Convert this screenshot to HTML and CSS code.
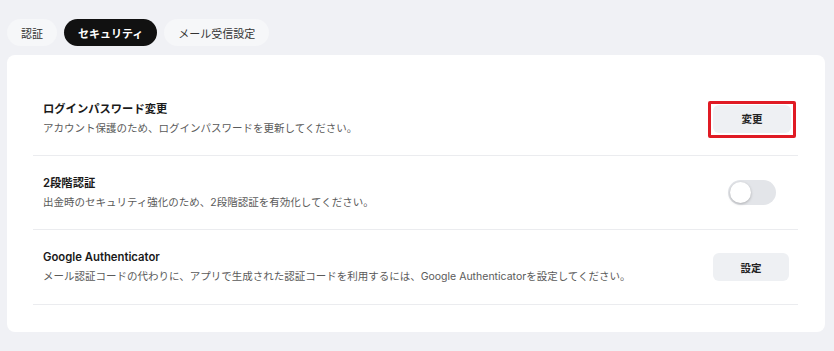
FILE: index.html
```html
<!DOCTYPE html>
<html lang="ja">
<head>
<meta charset="utf-8">
<link rel="stylesheet" href="styles.css">
</head>
<body>
<div class="page">
  <nav class="tabs">
    <span class="tab">認証</span>
    <span class="tab active">セキュリティ</span>
    <span class="tab">メール受信設定</span>
  </nav>
  <section class="card">
    <div class="row">
      <div class="info">
        <div class="title">ログインパスワード変更</div>
        <div class="desc">アカウント保護のため、ログインパスワードを更新してください。</div>
      </div>
      <button class="btn highlighted">変更</button>
    </div>
    <div class="row">
      <div class="info">
        <div class="title">2段階認証</div>
        <div class="desc">出金時のセキュリティ強化のため、2段階認証を有効化してください。</div>
      </div>
      <span class="toggle"><span class="knob"></span></span>
    </div>
    <div class="row">
      <div class="info">
        <div class="title">Google Authenticator</div>
        <div class="desc">メール認証コードの代わりに、アプリで生成された認証コードを利用するには、Google Authenticatorを設定してください。</div>
      </div>
      <button class="btn">設定</button>
    </div>
  </section>
</div>
</body>
</html>
```

FILE: styles.css
```css
* { box-sizing: border-box; }
html, body { margin: 0; padding: 0; }
body {
  background: #f0f1f5;
  font-family: Inter, "Noto Sans CJK JP", sans-serif;
  color: #1a1a1a;
  width: 834px;
  height: 351px;
  overflow: hidden;
}
.page {
  padding: 19px 9px 0 7px;
}
.tabs {
  display: flex;
  gap: 7px;
  height: 27px;
}
.tab {
  display: flex;
  align-items: center;
  justify-content: center;
  height: 27px;
  padding: 0 14px;
  border-radius: 14px;
  background: #f6f7f9;
  font-size: 11px;
  color: #333;
}
.tab.active {
  background: #111;
  color: #fff;
  font-weight: 700;
}
.card {
  margin-top: 9px;
  background: #fff;
  border-radius: 8px;
  padding: 27px 27px 27px 26px;
}
.row {
  display: flex;
  align-items: center;
  justify-content: space-between;
  height: 74px;
  padding-left: 10px;
  border-bottom: 1px solid #ebecef;
}
.row:nth-child(3) { height: 75px; }
.info {
  display: flex;
  flex-direction: column;
  gap: 2px;
}
.title {
  font-size: 11.3px;
  font-weight: 600;
  line-height: 18px;
  color: #1a1a1a;
}
.desc {
  font-size: 10.5px;
  line-height: 18px;
  color: #5a5a5a;
}
.btn {
  width: 76px;
  height: 28px;
  margin-right: 9px;
  border: none;
  border-radius: 6px;
  background: #eef0f3;
  font-family: inherit;
  font-size: 10.5px;
  font-weight: 600;
  color: #222;
}
.btn.highlighted {
  position: relative;
  width: 78px;
  margin-right: 7px;
}
.btn.highlighted::after {
  content: "";
  position: absolute;
  top: -4px;
  bottom: -5px;
  left: -5px;
  right: -5px;
  border: 3px solid #e01b24;
  border-radius: 2px;
}
.toggle {
  display: flex;
  align-items: center;
  width: 48px;
  height: 25px;
  margin-right: 22px;
  padding: 2px;
  border-radius: 13px;
  background: #e3e5e9;
}
.knob {
  width: 21px;
  height: 21px;
  border-radius: 50%;
  background: #fff;
  box-shadow: 0 1px 3px rgba(0,0,0,0.25);
}
```
